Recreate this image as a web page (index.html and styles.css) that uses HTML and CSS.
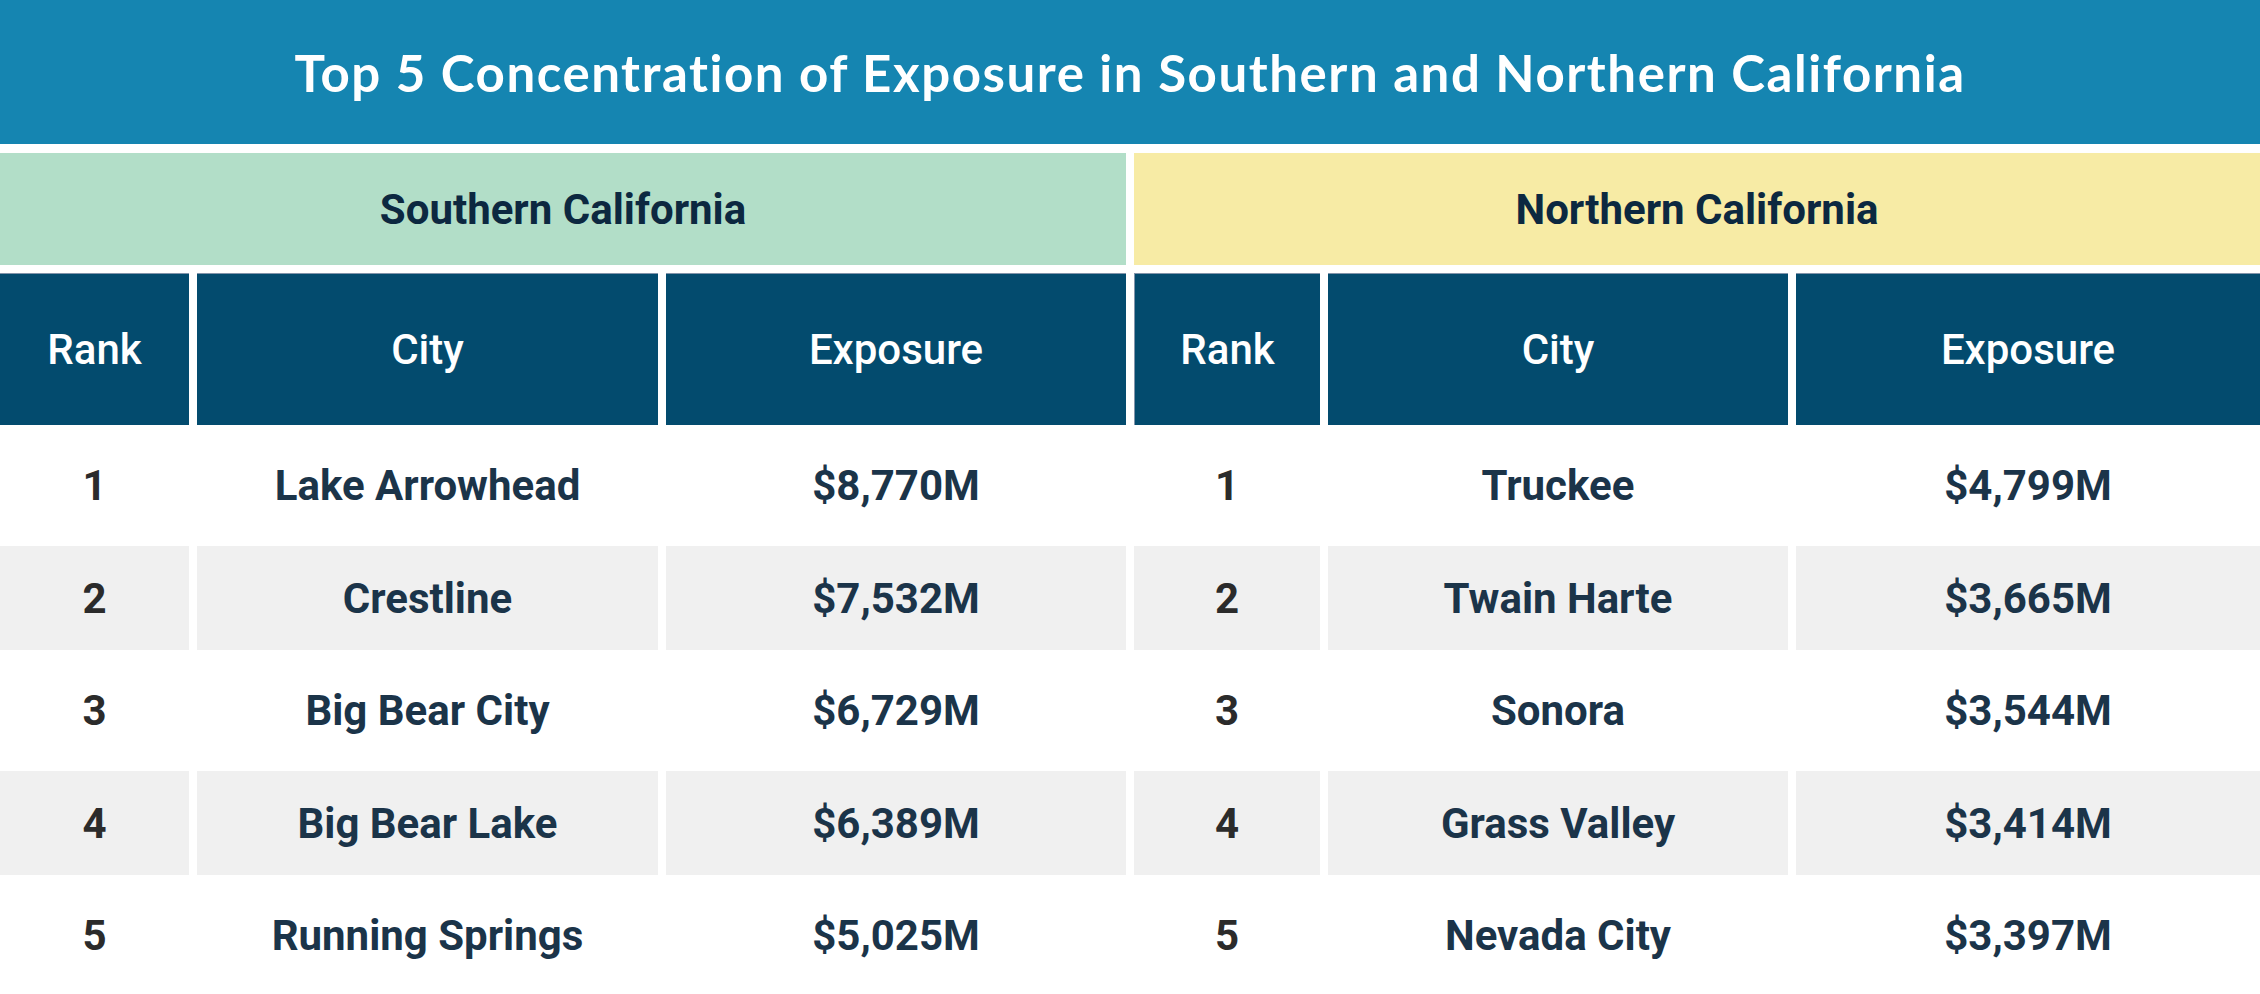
FILE: index.html
```html
<!DOCTYPE html>
<html lang="en">
<head>
<meta charset="utf-8">
<title>Top 5 Concentration of Exposure</title>
<link rel="stylesheet" href="styles.css">
</head>
<body>
<div class="page">
  <header class="banner"><h1>Top 5 Concentration of Exposure in Southern and Northern California</h1></header>
  <div class="groups">
    <div class="group south">Southern California</div>
    <div class="group north">Northern California</div>
  </div>
  <div class="row head">
    <div class="cell">Rank</div>
    <div class="cell">City</div>
    <div class="cell">Exposure</div>
    <div class="cell first-north">Rank</div>
    <div class="cell">City</div>
    <div class="cell">Exposure</div>
  </div>
  <div class="row body tall">
    <div class="cell rank">1</div><div class="cell">Lake Arrowhead</div><div class="cell">$8,770M</div>
    <div class="cell rank">1</div><div class="cell">Truckee</div><div class="cell">$4,799M</div>
  </div>
  <div class="row body alt">
    <div class="cell rank">2</div><div class="cell">Crestline</div><div class="cell">$7,532M</div>
    <div class="cell rank">2</div><div class="cell">Twain Harte</div><div class="cell">$3,665M</div>
  </div>
  <div class="row body tall">
    <div class="cell rank">3</div><div class="cell">Big Bear City</div><div class="cell">$6,729M</div>
    <div class="cell rank">3</div><div class="cell">Sonora</div><div class="cell">$3,544M</div>
  </div>
  <div class="row body alt">
    <div class="cell rank">4</div><div class="cell">Big Bear Lake</div><div class="cell">$6,389M</div>
    <div class="cell rank">4</div><div class="cell">Grass Valley</div><div class="cell">$3,414M</div>
  </div>
  <div class="row body">
    <div class="cell rank">5</div><div class="cell">Running Springs</div><div class="cell">$5,025M</div>
    <div class="cell rank">5</div><div class="cell">Nevada City</div><div class="cell">$3,397M</div>
  </div>
</div>
</body>
</html>
```
FILE: styles.css
```css
* { box-sizing: border-box; }
html, body { margin: 0; padding: 0; background: #ffffff; }
body { font-family: Roboto, "Liberation Sans", sans-serif; }

.page {
  width: 2260px;
  display: flex;
  flex-direction: column;
  gap: 8px;
}

.banner {
  height: 144px;
  background: #1585b1;
  display: flex;
  align-items: center;
  justify-content: center;
  margin-bottom: 1px;
}
.banner h1 {
  margin: 0;
  color: #ffffff;
  font-family: Lato, "Open Sans", sans-serif;
  font-weight: 700;
  font-size: 51px;
  letter-spacing: 1.55px;
}

.groups {
  display: grid;
  grid-template-columns: 1126px 1fr;
  gap: 8px;
  height: 112px;
}
.group {
  display: flex;
  align-items: center;
  justify-content: center;
  font-weight: 700;
  font-size: 42px;
  color: #0c2840;
}
.south { background: #b2dec8; }
.north { background: #f7eba5; }

.row {
  display: grid;
  grid-template-columns: 189px 461px 460px 186px 460px 1fr;
  column-gap: 8px;
}
.cell {
  display: flex;
  align-items: center;
  justify-content: center;
}

.head { height: 152px; }
.head .cell {
  background: #034b6e;
  border-top: 1px solid #8294aa;
  color: #ffffff;
  font-weight: 500;
  font-size: 42px;
}
.head .first-north { border-left: 1px solid #8294aa; }

.body { height: 104px; }
.body.tall { height: 105px; }
.body .cell {
  font-weight: 700;
  font-size: 42px;
  color: #1b3449;
  background: #ffffff;
}
.body.alt .cell { background: #f0f0f0; }
.body .rank { color: #2b2b2b; }
```
